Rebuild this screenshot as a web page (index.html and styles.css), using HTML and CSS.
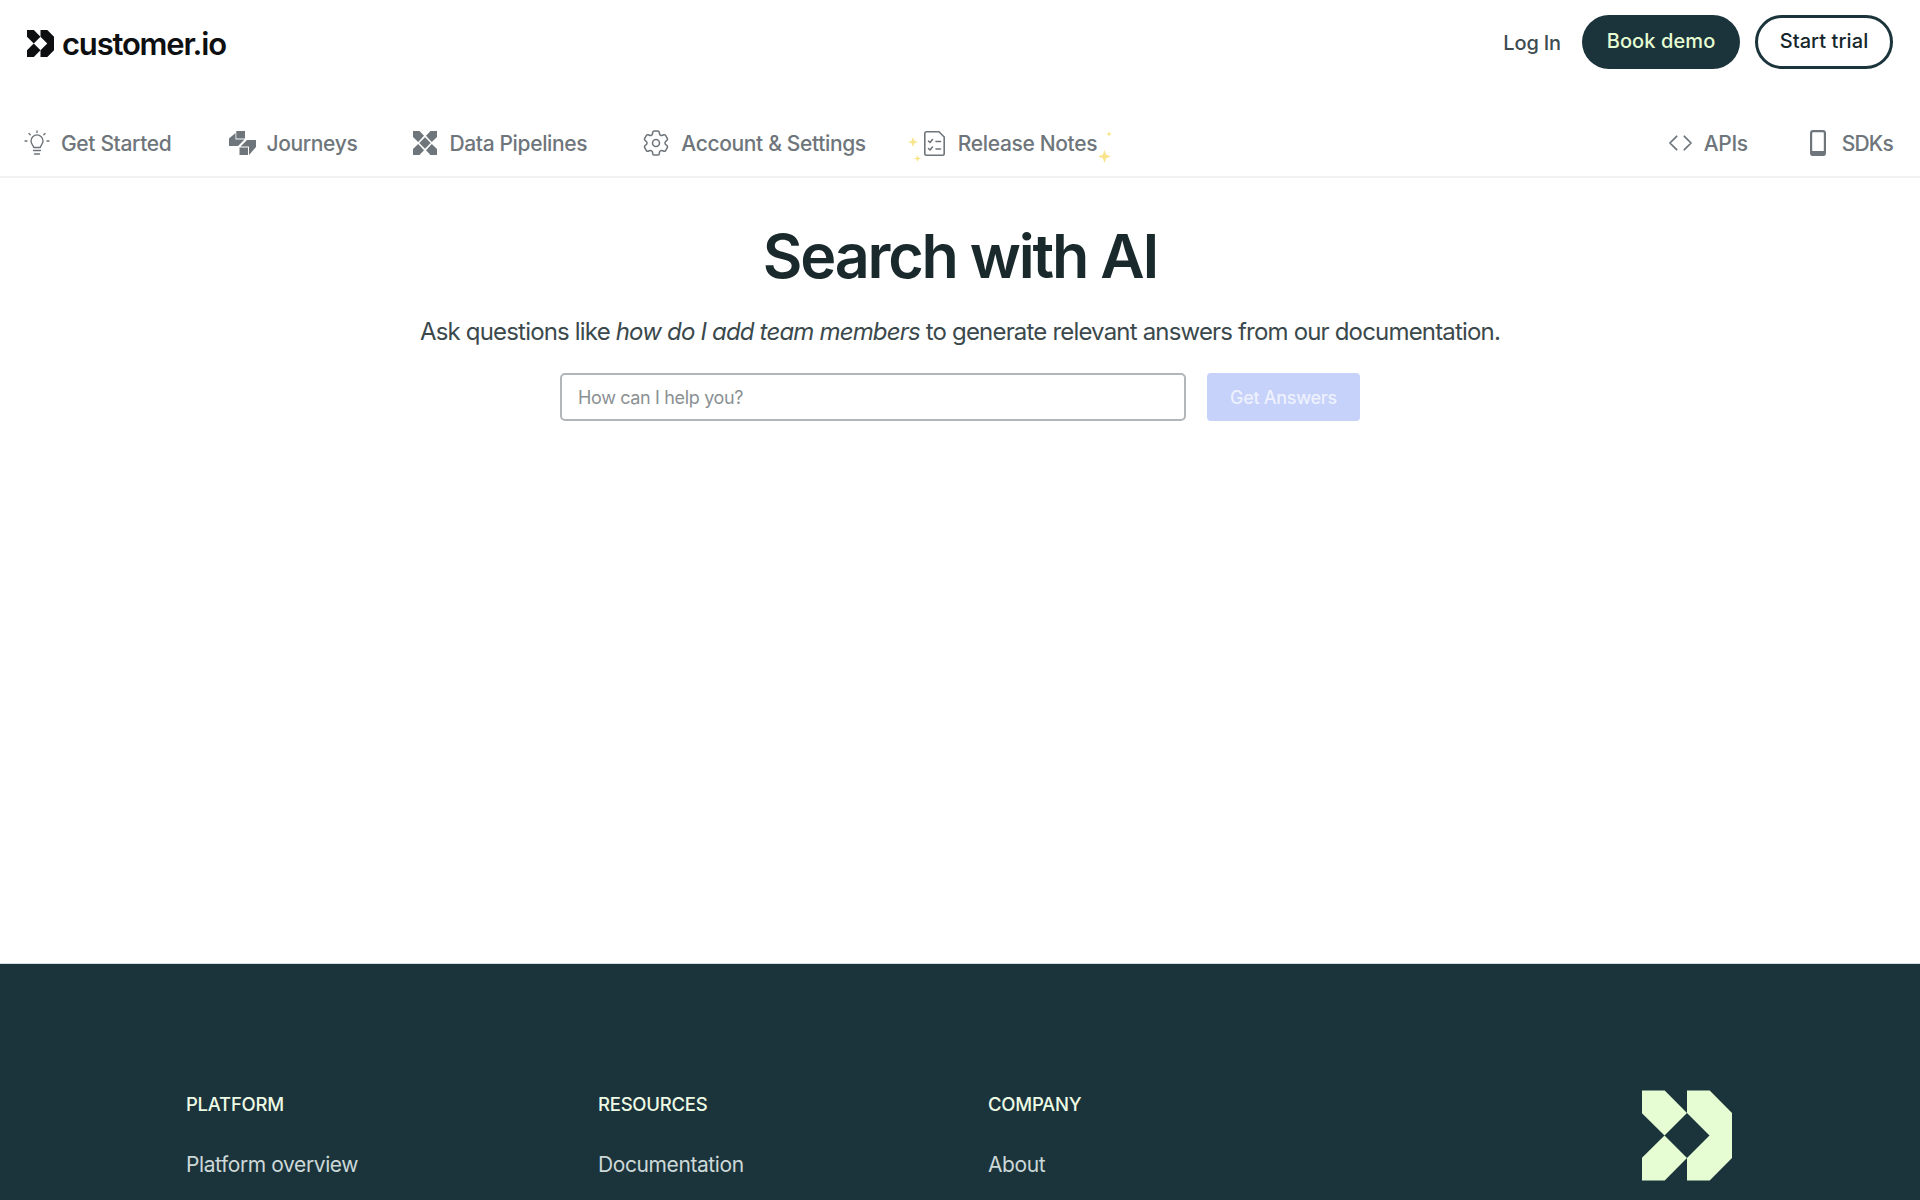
FILE: index.html
```html
<!DOCTYPE html>
<html lang="en">
<head>
<meta charset="utf-8">
<title>Search with AI</title>
<link rel="stylesheet" href="styles.css">
</head>
<body>
<svg class="defs" width="0" height="0" aria-hidden="true"><defs>
<g id="mark"><path d="M0 0H22.700L45 22.500 22.500 45 0 22.700Z"/><path d="M0 67.300 22.500 45 45 67.500 22.700 90H0Z"/><path d="M45 0H67.700L90 22.500V67.500L67.700 90H45V67.500L67.500 45 45 22.500Z"/></g>
<path id="star" d="M5 0 6.300 3.700 10 5 6.300 6.300 5 10 3.700 6.300 0 5 3.700 3.700Z"/>
</defs></svg>
<header class="top">
  <a class="brand"><svg class="brand-mark" viewBox="0 0 90 90"><use href="#mark"/></svg><span class="brand-name">customer.io</span></a>
  <div class="actions">
    <a class="login">Log In</a>
    <a class="pill pill-dark">Book demo</a>
    <a class="pill pill-light">Start trial</a>
  </div>
</header>
<nav class="tabs">
  <div class="tab-group">
    <a class="tab tab-first"><svg class="ico" viewBox="0 0 26 26" fill="none" stroke="currentColor" stroke-width="1.400" stroke-linecap="round" stroke-linejoin="round"><path d="M9.500 20.500h7M10.500 24h5"/><path d="M9.700 17.500c0-2-2.700-3.300-2.700-6.600a6 6 0 0 1 12 0c0 3.300-2.700 4.600-2.700 6.600Z"/><path d="M13 1v1.500M5 3.500l1.200 1.200M21 3.500l-1.200 1.200M1 11h2M23 11h2"/></svg><span>Get Started</span></a>
    <a class="tab tab-journey"><svg class="ico ico-journey" viewBox="0 0 27 25" fill="currentColor"><path d="M7.300 0H16V7.500H7.300Z"/><path d="M0 7.500 6.500 2V8.500H15.500L9 15H0Z"/><path d="M18 9H27V16L20 24V15.500H11.500Z"/><path d="M10.500 16.500H19V24H10.500Z"/></svg><span>Journeys</span></a>
    <a class="tab tab-data"><svg class="ico ico-data" viewBox="0 0 24 24" fill="currentColor"><path d="M0 0H6.500L11 4.800 5.200 11 0 6Z"/><path d="M17.500 0H24V6L18.800 11 13 4.800Z"/><path d="M12 6.300 17.700 12 12 17.700 6.300 12Z"/><path d="M0 18 5.200 13 11 19.200 6.500 24H0Z"/><path d="M18.800 13 24 18V24H17.500L13 19.200Z"/></svg><span>Data Pipelines</span></a>
    <a class="tab tab-gear"><svg class="ico" viewBox="2.300 2.300 19.400 19.400" fill="none" stroke="currentColor" stroke-width="1.150" stroke-linejoin="round"><path d="M9.594 3.940c.09-.542.56-.94 1.110-.94h2.593c.55 0 1.020.398 1.110.94l.213 1.281c.063.374.313.686.645.87.074.04.147.083.22.127.325.196.72.257 1.075.124l1.217-.456a1.125 1.125 0 0 1 1.370.49l1.296 2.247a1.125 1.125 0 0 1-.26 1.431l-1.003.827c-.293.241-.438.613-.43.992a7.723 7.723 0 0 1 0 .255c-.008.378.137.75.43.991l1.004.827c.424.35.534.955.26 1.430l-1.298 2.247a1.125 1.125 0 0 1-1.369.491l-1.217-.456c-.355-.133-.75-.072-1.076.124a6.470 6.470 0 0 1-.22.128c-.331.183-.581.495-.644.869l-.213 1.281c-.09.543-.56.94-1.110.94h-2.594c-.55 0-1.019-.398-1.110-.94l-.213-1.281c-.062-.374-.312-.686-.644-.87a6.520 6.520 0 0 1-.22-.127c-.325-.196-.72-.257-1.076-.124l-1.217.456a1.125 1.125 0 0 1-1.369-.49l-1.297-2.247a1.125 1.125 0 0 1 .26-1.431l1.004-.827c.292-.24.437-.613.43-.991a6.932 6.932 0 0 1 0-.255c.007-.38-.138-.751-.43-.992l-1.004-.827a1.125 1.125 0 0 1-.26-1.430l1.297-2.247a1.125 1.125 0 0 1 1.370-.491l1.216.456c.356.133.751.072 1.076-.124.072-.044.146-.086.22-.128.332-.183.582-.495.644-.869l.214-1.280Z"/><circle cx="12" cy="12" r="2.600"/></svg><span>Account &amp; Settings</span></a>
    <a class="tab tab-release">
      <svg class="spark spark-a" viewBox="0 0 10 10"><use href="#star"/></svg>
      <svg class="spark spark-b" viewBox="0 0 10 10"><use href="#star"/></svg>
      <svg class="spark spark-c" viewBox="0 0 10 10"><use href="#star"/></svg>
      <svg class="spark spark-d" viewBox="0 0 10 10"><use href="#star"/></svg>
      <svg class="ico ico-doc" viewBox="0 0 21 25" fill="none" stroke="currentColor" stroke-width="1.600" stroke-linecap="round" stroke-linejoin="round"><path d="M2.500.8H15L20.200 6V22.500a1.700 1.700 0 0 1-1.700 1.700H2.500A1.700 1.700 0 0 1 .8 22.500V2.500A1.700 1.700 0 0 1 2.500.8Z"/><path d="M4.500 10l1.500 1.500 2.500-3M4.500 17.500l1.500 1.500 2.500-3M12 10.500H16.500M12 18H16.500"/></svg><span>Release Notes</span></a>
  </div>
  <div class="tab-group">
    <a class="tab tab-api"><svg class="ico ico-code" viewBox="0 0 26 18" fill="none" stroke="currentColor" stroke-width="1.800" stroke-linecap="round" stroke-linejoin="round"><path d="M9 2 2 9l7 7M17 2l7 7-7 7"/></svg><span>APIs</span></a>
    <a class="tab tab-sdk"><svg class="ico ico-phone" viewBox="0 0 16 26" fill="none" stroke="currentColor" stroke-width="2.200"><rect x="1.100" y="1.100" width="13.800" height="23.800" rx="2"/><path d="M1 22.500H15" stroke-width="3"/></svg><span>SDKs</span></a>
  </div>
</nav>
<main class="search">
  <h1>Search with AI</h1>
  <p class="lead">Ask questions like <em>how do I add team members</em> to generate relevant answers from our documentation.</p>
  <form class="ask">
    <input class="ask-input" type="text" placeholder="How can I help you?">
    <button class="ask-btn" type="button" disabled>Get Answers</button>
  </form>
</main>
<footer class="foot">
  <div class="foot-col foot-col-a"><h2>PLATFORM</h2><a>Platform overview</a></div>
  <div class="foot-col foot-col-b"><h2>RESOURCES</h2><a>Documentation</a></div>
  <div class="foot-col foot-col-c"><h2>COMPANY</h2><a>About</a></div>
  <svg class="foot-mark" viewBox="0 0 90 90"><use href="#mark"/></svg>
</footer>
</body>
</html>
```
FILE: styles.css
```css
* { box-sizing: border-box; }
html, body { margin: 0; padding: 0; }
body {
  height: 1200px;
  overflow: hidden;
  background: #fff;
  font-family: Inter, "Liberation Sans", sans-serif;
  color: #1b2b2e;
}
.defs { display: block; height: 0; }
.top {
  height: 108px;
  padding: 15px 27px 0 26px;
  display: flex;
  justify-content: space-between;
  align-items: flex-start;
}
.brand { display: flex; align-items: center; gap: 7px; height: 57px; color: #0d0f10; }
.brand-mark { width: 29px; height: 27px; fill: #0d0f10; }
.brand-name { font-size: 31px; font-weight: 600; letter-spacing: -1.200px; }
.actions { display: flex; align-items: center; gap: 15px; }
.login { font-size: 20px; font-weight: 500; color: #3d4b50; margin-right: 6px; letter-spacing: -.15px; position: relative; top: 1px; }
.pill {
  height: 54px;
  border-radius: 27px;
  display: flex;
  align-items: center;
  justify-content: center;
  font-size: 20px;
  font-weight: 500;
  letter-spacing: .1px;
  padding-bottom: 2px;
}
.pill-dark { width: 158px; background: #1b343b; color: #e6fcd2; }
.pill-light { width: 138px; background: #fff; color: #14262b; border: 3px solid #1b343b; }
.tabs {
  height: 70px;
  padding: 0 27px 0 24px;
  display: flex;
  justify-content: space-between;
  align-items: flex-start;
  border-bottom: 2px solid #f1f2f3;
}
.tab-group { display: flex; align-items: center; height: 70px; }
.tab {
  display: flex;
  align-items: center;
  gap: 11px;
  margin-right: 56px;
  height: 70px;
  font-size: 21px;
  font-weight: 500;
  letter-spacing: -.35px;
  color: #6e757b;
}
.tab-first { gap: 11px; margin-right: 58px; }
.tab-journey { gap: 10px; }
.tab-data { gap: 12px; }
.tab-gear { gap: 12px; }
.tab-api { margin-right: 62px; }
.tab-sdk { margin-right: 0; letter-spacing: -.8px; }
.tab-release { position: relative; gap: 13px; margin-right: 0; margin-left: 2px; }
.ico { width: 26px; height: 26px; flex: none; color: #6e757b; }
.ico-journey { width: 27px; height: 25px; }
.ico-data { width: 24px; height: 24px; }
.ico-doc { width: 21px; height: 25px; }
.ico-code { width: 25px; height: 18px; }
.ico-phone { width: 16px; height: 26px; margin-right: 5px; }
.spark { position: absolute; fill: #f8e48a; }
.spark-a { width: 10px; height: 10px; left: -16px; top: 29px; }
.spark-b { width: 7px; height: 7px; left: -10px; top: 47px; }
.spark-c { width: 6px; height: 6px; left: 182px; top: 23px; }
.spark-d { width: 13px; height: 13px; left: 174px; top: 42px; }
.search { height: 785px; display: flex; flex-direction: column; align-items: center; }
h1 {
  margin: 42px 0 0;
  font-size: 61px;
  line-height: 72px;
  font-weight: 600;
  letter-spacing: -2.200px;
  color: #1a2a2c;
}
.lead {
  margin: 24px 0 0;
  font-size: 24px;
  line-height: 32px;
  font-weight: 400;
  letter-spacing: -.82px;
  color: #3b494c;
}
.ask { margin: 25px 0 0; display: flex; gap: 21px; width: 800px; }
.ask-input {
  width: 626px;
  height: 48px;
  border: 2px solid #b3b6b8;
  border-radius: 5px;
  padding: 0 16px;
  font: 400 18px Inter, "Liberation Sans", sans-serif;
  letter-spacing: -.35px;
  background: #fff;
}
.ask-input::placeholder { color: #8b9093; opacity: 1; }
.ask-btn {
  width: 153px;
  height: 48px;
  border: 0;
  border-radius: 4px;
  background: #c6d2fa;
  color: #eef1fe;
  font: 500 18px Inter, "Liberation Sans", sans-serif;
  letter-spacing: -.3px;
}
.foot {
  height: 237px;
  background: #1b343b;
  padding: 128px 0 0 186px;
  display: flex;
  align-items: flex-start;
  border-top: 1px solid #cfe0e4;
}
.foot-col { display: flex; flex-direction: column; }
.foot-col h2 { margin: 0; font-size: 18.500px; line-height: 24px; font-weight: 500; letter-spacing: -.25px; color: #eefbe4; }
.foot-col a { margin-top: 36px; font-size: 21px; line-height: 26px; font-weight: 400; letter-spacing: -.4px; color: #cdd8d8; }
.foot-col-a { width: 412px; }
.foot-col-b { width: 390px; }
.foot-col-c { width: 654px; }
.foot-mark { width: 90px; height: 91px; fill: #e6fcd2; margin-top: -2px; }
```
